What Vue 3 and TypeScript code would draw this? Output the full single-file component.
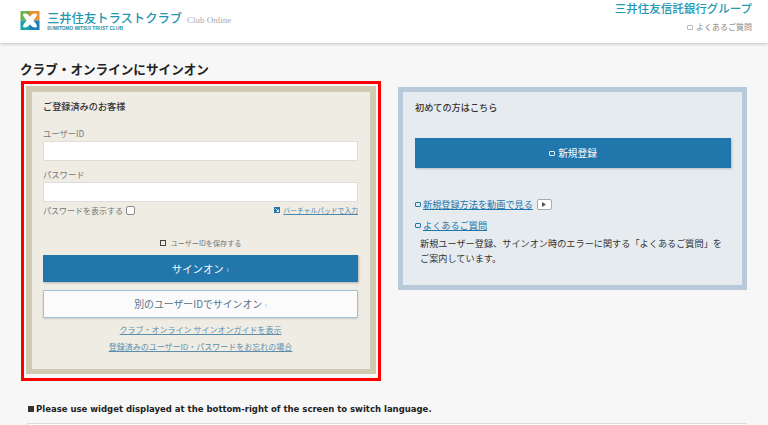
<script setup lang="ts">
const logoTiles: string[] = ['#6fb04a', '#ee8f2d', '#17a2a8', '#1b7fb5']
</script>

<template>
  <div class="page">
    <header class="header">
      <div class="brand">
        <svg class="mark" width="20" height="19" viewBox="0 0 20 20">
          <rect x="0" y="0" width="10" height="10" :fill="logoTiles[0]" />
          <rect x="10" y="0" width="10" height="10" :fill="logoTiles[1]" />
          <rect x="0" y="10" width="10" height="10" :fill="logoTiles[2]" />
          <rect x="10" y="10" width="10" height="10" :fill="logoTiles[3]" />
          <path d="M10 6C8 3 5 2 3 3C2 5 4 7 6.500 10C4 13 2 15 3 17C5 18 8 17 10 14C12 17 15 18 17 17C18 15 16 13 13.500 10C16 7 18 5 17 3C15 2 12 3 10 6Z" fill="#fff" />
        </svg>
        <div class="brand-text">
          <div class="brand-name">三井住友トラストクラブ</div>
          <div class="brand-sub">SUMITOMO MITSUI TRUST CLUB</div>
        </div>
        <span class="club">Club Online</span>
      </div>
      <div class="header-right">
        <div class="group">三井住友信託銀行グループ</div>
        <div class="faq-top"><i class="sq grey"></i>よくあるご質問</div>
      </div>
    </header>

    <main class="main">
      <h1 class="title">クラブ・オンラインにサインオン</h1>
      <div class="cols">
        <div class="red">
          <section class="login">
            <h2 class="card-title">ご登録済みのお客様</h2>
            <label class="lbl first">ユーザーID</label>
            <div class="input"></div>
            <label class="lbl second">パスワード</label>
            <div class="input"></div>
            <div class="pw-row">
              <span class="show">パスワードを表示する<i class="check"></i></span>
              <a class="pad">
                <svg class="pad-ico" width="6" height="6" viewBox="0 0 6 6"><rect width="6" height="6" fill="#2176ab" /><path d="M1.500 1.500L4.500 4.500M2.500 4.500H4.500V2.500" stroke="#fff" stroke-width=".8" fill="none" /></svg>
                <span>バーチャルパッドで入力</span>
              </a>
            </div>
            <div class="save"><i class="savebox"></i>ユーザーIDを保存する</div>
            <button class="primary">サインオン <span class="chev">›</span></button>
            <button class="secondary">別のユーザーIDでサインオン <span class="chev small">›</span></button>
            <a class="link l1">クラブ・オンライン サインオンガイドを表示</a>
            <a class="link l2">登録済みのユーザーID・パスワードをお忘れの場合</a>
          </section>
        </div>
        <section class="first-time">
          <h2 class="card-title">初めての方はこちら</h2>
          <button class="register"><i class="sq white"></i>新規登録</button>
          <div class="video-row">
            <i class="sq blue"></i><a>新規登録方法を動画で見る</a>
            <span class="play"><svg width="4" height="5" viewBox="0 0 5 6"><path d="M0 0L5 3L0 6Z" fill="#555" /></svg></span>
          </div>
          <div class="faq-row"><i class="sq blue"></i><a>よくあるご質問</a></div>
          <p class="desc">新規ユーザー登録、サインオン時のエラーに関する「よくあるご質問」を<br />ご案内しています。</p>
        </section>
      </div>
      <p class="notice"><i class="bullet"></i>Please use widget displayed at the bottom-right of the screen to switch language.</p>
      <div class="rule"></div>
    </main>
  </div>
</template>

<style>
html, body { margin: 0; height: 100%; overflow: hidden; background: #f7f7f7; }
</style>

<style scoped>
.page {
  width: 768px; height: 425px; overflow: hidden; background: #f7f7f7;
  font-family: "Noto Sans CJK JP", "Liberation Sans", sans-serif; color: #333;
}
.header {
  height: 43px; background: #fff; box-shadow: 0 1px 3px rgba(0,0,0,.22);
  display: flex; justify-content: space-between; box-sizing: border-box; padding: 0 16px 0 20px;
}
.brand { display: flex; align-items: flex-start; padding-top: 11px; }
.mark { flex: none; margin-right: 7px; }
.brand-text { width: 140px; }
.brand-name { font-size: 12.300px; line-height: 15px; color: #2397b0; white-space: nowrap; font-weight: 500; }
.brand-sub { font: bold 4.800px/6px "Liberation Sans", sans-serif; color: #1d91ab; white-space: nowrap; }
.club { font: 9px/12px "Liberation Serif", serif; color: #aaa; margin: 3px 0 0 0; white-space: nowrap; }
.header-right { text-align: right; }
.group { font-size: 11.500px; line-height: 16px; color: #2397b0; white-space: nowrap; font-weight: 500; }
.faq-top { font-size: 8px; line-height: 12px; color: #888; margin-top: 5px; display: flex; justify-content: flex-end; align-items: center; }
.sq { display: inline-block; width: 4px; height: 3px; border: 1px solid; box-sizing: content-box; flex: none; border-radius: 1px; }
.grey { border-color: #bbb; margin-right: 3px; }
.white { border-color: #e8f0f5; margin-right: 3px; }
.blue { border-color: #2176ab; margin-right: 2px; }

.main { padding: 17px 0 0 20px; }
.title { font-size: 12.600px; line-height: 18px; margin: 0; color: #222; font-weight: 700; }
.cols { display: flex; align-items: flex-start; margin-top: 3px; }
.red { border: 3px solid #ff0000; width: 360px; height: 300px; box-sizing: border-box; margin-left: 1px; padding: 2px 2px 4px; flex: none; }
.login {
  border: solid #d0cab2; border-width: 6px 6px 5px; background: #efece4; height: 100%; box-sizing: border-box;
  padding: 7px 12px 0 11px; display: flex; flex-direction: column;
}
.card-title { font-size: 9.170px; line-height: 14px; margin: 0; color: #333; font-weight: 500; }
.lbl { font-size: 8.300px; line-height: 12px; color: #777; }
.first { margin-top: 14px; }
.second { margin-top: 7px; }
.input { height: 20px; background: #fff; border: 1px solid #ddd; box-sizing: border-box; margin-top: 2px; flex: none; }
.pw-row { display: flex; justify-content: space-between; align-items: center; height: 14px; margin-top: 1px; flex: none; }
.show { font-size: 8px; color: #777; display: flex; align-items: center; white-space: nowrap; }
.check { width: 7px; height: 7px; border: 1px solid #888; border-radius: 2px; background: #fff; margin-left: 3px; }
.pad { font-size: 6.800px; color: #4b86ad; display: flex; align-items: center; white-space: nowrap; }
.pad span { text-decoration: underline; }
.pad-ico { margin-right: 3px; }
.save { font-size: 7.100px; color: #777; display: flex; justify-content: center; align-items: center; line-height: 12px; margin-top: 20px; flex: none; }
.savebox { width: 4px; height: 4px; border: 1px solid #444; margin-right: 5px; }
button { font-family: inherit; padding: 0; display: block; box-sizing: border-box; }
.primary {
  height: 27px; margin-top: 6px; background: #2176ab; color: #fff; border: 0; font-size: 10.400px;
  box-shadow: 1px 1px 2px rgba(0,0,0,.25); flex: none;
}
.chev { color: #b6cddd; }
.chev.small { color: #9bb; font-size: 8px; }
.secondary {
  height: 28px; margin-top: 8px; background: #fbfbfb; color: #56718a; border: 1px solid #9cc3dc; font-size: 9.900px;
  box-shadow: 0 1px 2px rgba(0,0,0,.15); flex: none; border-radius: 1px;
}
.link { font-size: 8px; line-height: 12px; color: #5d8eae; text-decoration: underline; text-align: center; white-space: nowrap; flex: none; }
.l1 { margin-top: 6px; }
.l2 { margin-top: 5px; }

.first-time {
  margin: 6px 0 0 17px; width: 349px; height: 203px; box-sizing: border-box; border: 5px solid #b8cad9; background: #e6ebf0;
  padding: 8px 12px 0; flex: none;
}
.register {
  width: 316px; height: 30px; background: #2176ab; border: 0; color: #fff; font-size: 9.700px; margin-top: 24px;
  display: flex; align-items: center; justify-content: center; box-shadow: 1px 1px 2px rgba(0,0,0,.2);
}
.video-row, .faq-row { display: flex; align-items: center; font-size: 9.170px; line-height: 14px; color: #2176ab; }
.video-row { margin-top: 29px; }
.faq-row { margin-top: 7px; }
.video-row a, .faq-row a { text-decoration: underline; white-space: nowrap; }
.play {
  width: 15px; height: 11px; margin-left: 4px; background: #fff; border: 1px solid #aaa; border-radius: 2px; box-sizing: border-box;
  display: flex; align-items: center; justify-content: center;
}
.desc { margin: 4px 0 0 5px; font-size: 9.170px; line-height: 15px; color: #333; white-space: nowrap; }
.notice { margin: 21px 0 0 8px; font: bold 8.500px/14px "DejaVu Sans", sans-serif; color: #222; display: flex; align-items: center; white-space: nowrap; }
.bullet { width: 6px; height: 6px; background: #333; margin-right: 2px; }
.rule { height: 20px; width: 720px; margin: 7px 0 0 7px; border: 1px solid #ddd; background: #fff; box-sizing: border-box; }
</style>
